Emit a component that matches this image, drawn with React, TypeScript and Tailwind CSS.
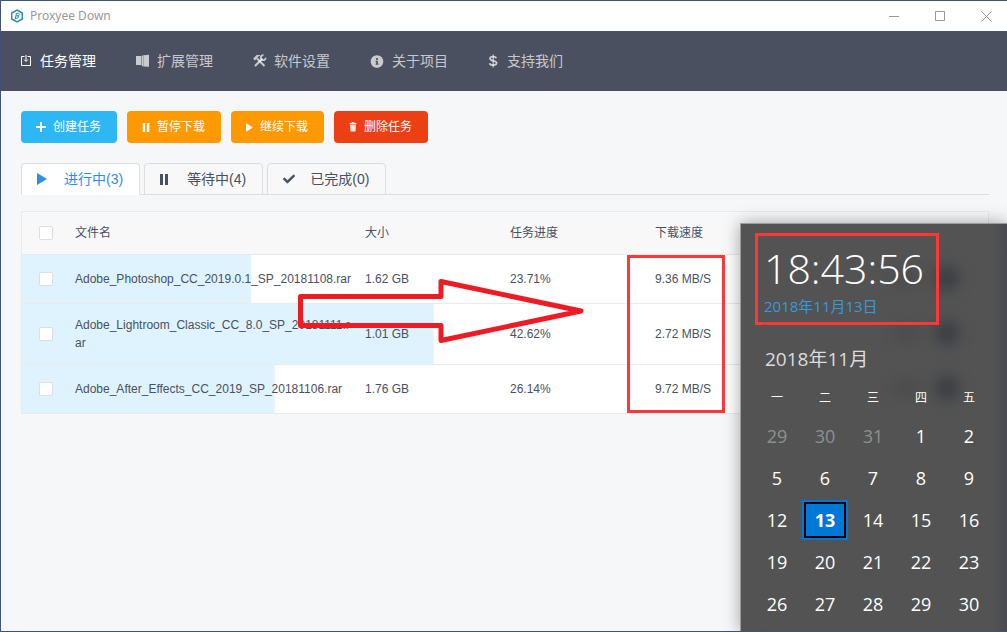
import { useState } from 'react';
import type { ReactNode } from 'react';
import { FaCheck, FaInfoCircle } from 'react-icons/fa';
import clsx from 'clsx';

interface Task {
  name: string;
  size: string;
  progress: number;
  speed: string;
}

const tasks: Task[] = [
  { name: 'Adobe_Photoshop_CC_2019.0.1_SP_20181108.rar', size: '1.62 GB', progress: 23.71, speed: '9.36 MB/S' },
  { name: 'Adobe_Lightroom_Classic_CC_8.0_SP_20181111.rar', size: '1.01 GB', progress: 42.62, speed: '2.72 MB/S' },
  { name: 'Adobe_After_Effects_CC_2019_SP_20181106.rar', size: '1.76 GB', progress: 26.14, speed: '9.72 MB/S' },
];

const weekdays = ['一', '二', '三', '四', '五'];

const weeks = [
  [29, 30, 31, 1, 2],
  [5, 6, 7, 8, 9],
  [12, 13, 14, 15, 16],
  [19, 20, 21, 22, 23],
  [26, 27, 28, 29, 30],
];

function Logo() {
  return (
    <svg viewBox="0 0 14 14" className="size-3.5" fill="none" stroke="#2a8fa8" aria-hidden>
      <path d="M7 1l5.300 3v6L7 13 1.700 10V4z" strokeWidth="1.500" />
      <path d="M5 10.500l1.500-6.200h2c1.300.2 1 2.400-.5 2.500H6.500h1.200c1.300.2 1 2.300-.7 2.400H5.400" strokeWidth="1" />
    </svg>
  );
}

function InboxIcon() {
  return (
    <svg viewBox="0 0 13 12" className="h-3 w-[13px]" fill="none" stroke="currentColor" aria-hidden>
      <path d="M3.500 1.500H.5v9h9v-9H6.500" />
      <path d="M5 0v6M3 4.500l2 2 2-2" />
    </svg>
  );
}

function BookIcon() {
  return (
    <svg viewBox="0 0 15 14" className="h-3.5 w-[15px]" fill="currentColor" aria-hidden>
      <path d="M0 2h5v9H0zM5.500 2L7 1.200v11.300l-1.500-1zM7.300 1.200L13 .8v12l-5.700-.3z" />
    </svg>
  );
}

function ToolsIcon() {
  return (
    <svg viewBox="0 0 15 14" className="h-3.5 w-[15px]" fill="none" stroke="currentColor" aria-hidden>
      <path d="M1 5.500L4.800 1.700" strokeWidth="2.600" />
      <path d="M4.500 1.500h2.500" strokeWidth="1" />
      <path d="M4 4.500l7.500 7.500" strokeWidth="2" />
      <path d="M2 12l7.500-7.500" strokeWidth="2.200" />
      <path d="M10.500 1.200a2.500 2.500 0 1 0 2.200 2.600" strokeWidth="1.800" />
    </svg>
  );
}

function DollarIcon() {
  return (
    <svg viewBox="0 0 13 14" className="h-3.5 w-[13px]" fill="none" stroke="currentColor" aria-hidden>
      <path d="M8.200 4.300C7.800 3 6.700 2.600 5 2.600c-1.800 0-3 .7-3 2 0 3.200 6.600 1.300 6.600 4.500 0 1.500-1.500 2.100-3.400 2.100S2 10.500 1.600 9.200" strokeWidth="1.800" />
      <path d="M5.200.5v13" strokeWidth="1.200" />
    </svg>
  );
}

function TrashIcon() {
  return (
    <svg viewBox="0 0 8 10" className="h-2.5 w-2" fill="currentColor" aria-hidden>
      <path d="M.5 1h2V.3h3V1h2v1h-7z" />
      <path d="M1 2.500h6L6.500 9.500h-5z" fillOpacity=".85" />
    </svg>
  );
}

function PlusIcon() {
  return (
    <svg viewBox="0 0 10 10" className="size-2.5" stroke="currentColor" strokeWidth="2" aria-hidden>
      <path d="M5 0v10M0 5h10" />
    </svg>
  );
}

function PauseIcon({ className }: { className: string }) {
  return (
    <svg viewBox="0 0 8 11" className={className} fill="currentColor" aria-hidden>
      <path d="M0 0h3v11H0zM5 0h3v11H5z" />
    </svg>
  );
}

function PlayIcon({ className }: { className: string }) {
  return (
    <svg viewBox="0 0 10 12" className={className} fill="currentColor" aria-hidden>
      <path d="M0 0l10 6-10 6z" />
    </svg>
  );
}

const navItems: { label: string; icon: ReactNode }[] = [
  { label: '任务管理', icon: <InboxIcon /> },
  { label: '扩展管理', icon: <BookIcon /> },
  { label: '软件设置', icon: <ToolsIcon /> },
  { label: '关于项目', icon: <FaInfoCircle className="h-[13px] w-4 pr-0.5" /> },
  { label: '支持我们', icon: <DollarIcon /> },
];

const actions: { label: string; icon: ReactNode; color: string }[] = [
  { label: '创建任务', icon: <PlusIcon />, color: 'bg-[#2db7f5]' },
  { label: '暂停下载', icon: <PauseIcon className="h-[9px] w-2" />, color: 'bg-[#ff9900]' },
  { label: '继续下载', icon: <PlayIcon className="h-[9px] w-[7px]" />, color: 'bg-[#ff9900]' },
  { label: '删除任务', icon: <TrashIcon />, color: 'bg-[#ed3f14]' },
];

const tabs: { label: string; icon: ReactNode }[] = [
  { label: '进行中(3)', icon: <PlayIcon className="h-3 w-2.5" /> },
  { label: '等待中(4)', icon: <PauseIcon className="h-[11px] w-2" /> },
  { label: '已完成(0)', icon: <FaCheck className="h-3 w-3" /> },
];

function TitleBar() {
  return (
    <header className="flex h-[30px] items-center justify-between bg-white pl-[9px] text-[#999]">
      <div className="flex items-center gap-1.5">
        <Logo />
        <span className="font-['Noto_Sans',sans-serif] text-xs">Proxyee Down</span>
      </div>
      <div className="flex h-full gap-1">
        <button aria-label="最小化" className="flex w-[42px] items-center justify-center">
          <svg viewBox="0 0 11 11" className="size-[11px]" stroke="currentColor" aria-hidden>
            <path d="M0 5.500h10" />
          </svg>
        </button>
        <button aria-label="最大化" className="flex w-[42px] items-center justify-center">
          <svg viewBox="0 0 11 11" className="size-[11px]" fill="none" stroke="currentColor" aria-hidden>
            <path d="M.5.5h9v9h-9z" />
          </svg>
        </button>
        <button aria-label="关闭" className="flex w-[42px] items-center justify-center">
          <svg viewBox="0 0 11 11" className="size-[11px]" stroke="currentColor" aria-hidden>
            <path d="M.5.5l10 10M10.500.5l-10 10" />
          </svg>
        </button>
      </div>
    </header>
  );
}

function CheckBox({ label }: { label: string }) {
  return (
    <input
      type="checkbox"
      aria-label={label}
      className="block size-3.5 appearance-none rounded-xs border border-[#dddee1] bg-white checked:bg-[#2d8cf0]"
    />
  );
}

function TaskTable() {
  return (
    <div className="border-x border-t border-[#e9eaec]">
      <table className="w-full table-fixed border-separate border-spacing-0 text-left text-xs leading-[18px]">
        <colgroup>
          <col className="w-[45px]" />
          <col className="w-[290px]" />
          <col className="w-[145px]" />
          <col className="w-[145px]" />
          <col />
        </colgroup>
        <thead className="bg-[#f8f8f9]">
          <tr className="h-[43px] *:border-b *:border-[#e9eaec] *:font-normal">
            <th className="pl-[17px]">
              <CheckBox label="全选" />
            </th>
            <th className="pl-2">文件名</th>
            <th className="pl-2">大小</th>
            <th className="pl-2">任务进度</th>
            <th className="pl-2">下载速度</th>
          </tr>
        </thead>
        <tbody>
          {tasks.map((task) => (
            <tr
              key={task.name}
              className="h-[49px] bg-white bg-linear-to-r from-[#def3fe] to-[#def3fe] bg-no-repeat *:border-b *:border-[#e9eaec]"
              // the finished share of the download fills the row from the left
              style={{ backgroundSize: `${task.progress}% 100%` }}
            >
              <td className="pl-[17px]">
                <CheckBox label={task.name} />
              </td>
              <td className="py-3 pr-1 pl-2 break-all">{task.name}</td>
              <td className="pl-2">{task.size}</td>
              <td className="pl-2">{task.progress}%</td>
              <td className="pl-2">{task.speed}</td>
            </tr>
          ))}
        </tbody>
      </table>
    </div>
  );
}

function ClockPanel() {
  return (
    <aside className="absolute right-0 bottom-0 w-[267px] overflow-hidden border-t border-l border-[#9c9c9c] bg-[#535353] bg-linear-to-l from-[#474a50] to-[#535353] to-5% pt-[9px] pb-1.5 font-['Open_Sans','Noto_Sans_CJK_SC',sans-serif] text-white shadow-[0_0_16px_rgba(0,0,0,0.35)]">
      {/* what shows through the acrylic background */}
      <div aria-hidden className="absolute top-[42px] right-12 grid gap-[31px] blur-[7px]">
        {tasks.map((task) => (
          <div key={task.name} className="flex h-6 items-center gap-3">
            <span className="h-4 w-8 rounded-full bg-[#4c4c4c]" />
            <span className="size-6 rounded-full bg-[#3a3d42]" />
          </div>
        ))}
      </div>

      <div className="relative ml-3.5 h-[92px] w-[184px] border-3 border-[#ff3737] pl-1.5">
        <time className="block pt-1.5 text-[41px] leading-[52px] font-light">18:43:56</time>
        <a href="#today" className="block text-[15px] leading-6 text-[#3b96dd]">
          2018年11月13日
        </a>
      </div>

      <h2 className="relative mt-5 ml-6 text-[19px] leading-7 text-[#dcdcdc]">2018年11月</h2>

      <table className="relative mt-2 ml-3 w-60 table-fixed border-separate border-spacing-0 text-center">
        <thead>
          <tr className="h-[34px] text-xs">
            {weekdays.map((day) => (
              <th key={day} className="font-normal">
                {day}
              </th>
            ))}
          </tr>
        </thead>
        <tbody className="text-lg leading-6">
          {weeks.map((week, row) => (
            <tr key={week[0]} className="h-[42px]">
              {week.map((day) => {
                const today = day === 13;
                const previousMonth = row === 0 && day > 7;
                return (
                  <td key={day} className="p-px">
                    <button
                      aria-current={today ? 'date' : undefined}
                      className={clsx(
                        'block h-10 w-full',
                        today && 'border-2 border-[#0078d7] bg-[#0078d7] font-bold inset-ring-2 inset-ring-black',
                        previousMonth ? 'text-[#8f8f8f]' : !today && 'font-medium',
                      )}
                    >
                      {day}
                    </button>
                  </td>
                );
              })}
            </tr>
          ))}
        </tbody>
      </table>
    </aside>
  );
}

export default function App() {
  const [activeNav, setActiveNav] = useState(0);
  const [activeTab, setActiveTab] = useState(0);

  return (
    <div className="relative min-h-screen overflow-hidden border-y border-l border-[#3f5378] bg-[#f5f7f9] font-['Liberation_Sans','Noto_Sans_CJK_SC',sans-serif] text-[#495060]">
      <TitleBar />

      <nav className="flex h-[60px] items-center gap-10 bg-[#4b5060] pl-5">
        {navItems.map((item, i) => (
          <a
            key={item.label}
            href="#nav"
            onClick={() => setActiveNav(i)}
            className={clsx('flex items-center gap-1.5 text-sm', i === activeNav ? 'text-white' : 'text-white/70')}
          >
            {item.icon}
            {item.label}
          </a>
        ))}
      </nav>

      <main className="py-5 pr-[18px] pl-5">
        <div className="flex gap-2.5">
          {actions.map((action) => (
            <button
              key={action.label}
              className={clsx('flex h-8 items-center gap-[7px] rounded pr-4 pl-[15px] text-xs text-white', action.color)}
            >
              {action.icon}
              {action.label}
            </button>
          ))}
        </div>

        <div role="tablist" className="mt-5 flex gap-1 border-b border-[#dddee1]">
          {tabs.map((tab, i) => (
            <button
              key={tab.label}
              role="tab"
              aria-selected={i === activeTab}
              onClick={() => setActiveTab(i)}
              className={clsx(
                '-mb-px flex h-8 items-center rounded-t border border-[#dddee1] pr-4 pl-[15px] text-sm',
                i === activeTab ? 'border-b-white bg-white text-[#2d8cf0]' : 'bg-[#f8f8f9]',
              )}
            >
              <span className="w-[27px]">{tab.icon}</span>
              {tab.label}
            </button>
          ))}
        </div>

        <div className="mt-4">
          <TaskTable />
        </div>
      </main>

      {/* hand-drawn marks over the window */}
      <svg
        viewBox="0 0 290 70"
        className="pointer-events-none absolute top-[275px] left-[295px] h-[70px] w-[290px]"
        fill="none"
        stroke="#ed1c24"
        strokeWidth="5"
        strokeLinejoin="round"
        aria-hidden
      >
        <path d="M4.500 20.500h140.500V5.500L285 35 145 64.500V49.500H4.500z" />
      </svg>
      <div className="pointer-events-none absolute top-[254px] left-[626px] h-[158px] w-[98px] border-3 border-[#ff3737]" />

      <ClockPanel />
    </div>
  );
}
